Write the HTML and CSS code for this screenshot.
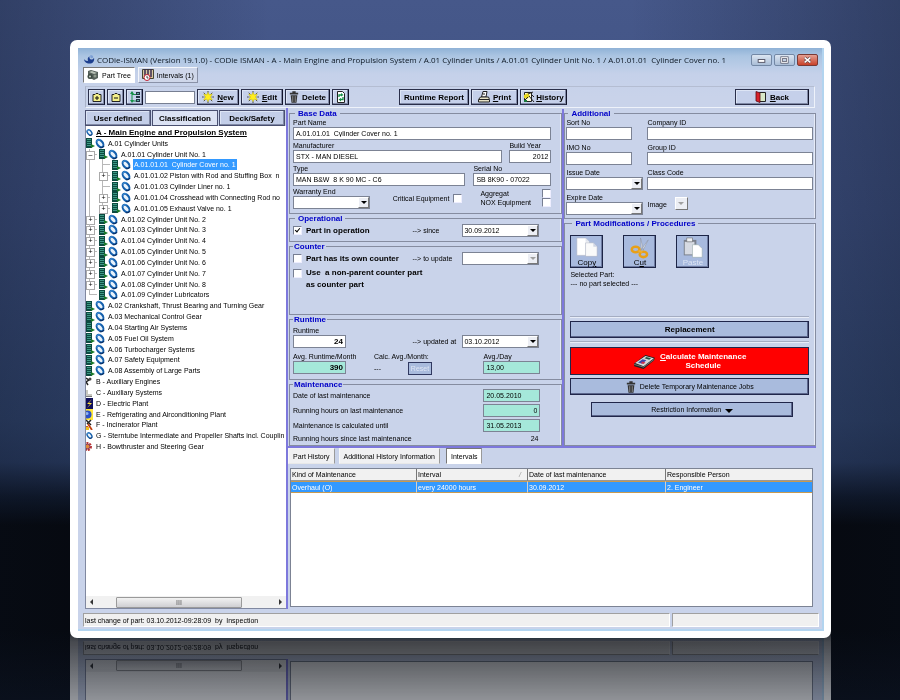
FILE: index.html
```html
<!DOCTYPE html>
<html lang="en">
<head>
<meta charset="utf-8">
<title>CODie-ISMAN</title>
<link rel="stylesheet" href="styles.css">
</head>
<body>
<svg class="defs" aria-hidden="true">
  <symbol id="i-cab" viewBox="0 0 9 10"><path fill="#0c4a40" d="M0 0h6v10H0z"/><path stroke="#3f9a86" stroke-width="1" d="M1 1.500h4M1 3.500h4M1 5.500h4M1 7.500h4"/><path fill="#1b7a2a" d="M5 6l4 2-4 2z"/></symbol>
  <symbol id="i-disc" viewBox="0 0 11 11"><ellipse cx="5.500" cy="5.500" rx="3" ry="4.600" transform="rotate(-40 5.500 5.500)" fill="#e8f2fb" stroke="#1560ad" stroke-width="2.200"/><path d="M1.500 3Q3 .8 6 1.500" fill="none" stroke="#4a9ae0"/><path d="M5 10q3 .8 5-1.500" fill="none" stroke="#0a2f66" stroke-width="1.200"/></symbol>
  <symbol id="i-trash" viewBox="0 0 12 14"><path fill="#333" d="M4 0h4v2h3v2H1V2h3zM2 5h8l-1 9H3z"/><path stroke="#999" d="M4.500 6v7M7.500 6v7"/></symbol>
  <symbol id="i-spark" viewBox="0 0 14 14"><path stroke="#333" stroke-width="1" stroke-dasharray="2 1" d="M7 0v14M0 7h14M2 2l10 10M12 2L2 12"/><path fill="#ffee20" stroke="#c8b800" stroke-width=".5" d="M7 1.500l1.300 3L12 3.500 10 7l2 3.500-3.700-1L7 12.500 5.700 9.500l-3.700 1L4 7 2 3.500l3.700 1z"/></symbol>
</svg>

<main class="window">
 <div class="client">
  <header class="titlebar">
    <svg class="logo" viewBox="0 0 12 10"><path fill="#1d3f8f" d="M11 3c1 4-2 7-5.500 6.500C2 9.500 0 7 0 4.500c1.500 2 3 2.500 4.500 2C3.500 5 4 2.500 6 1.500c-.5 2 .5 3.500 2 3.500S10.500 4 11 3z"/><path fill="#7c9fd4" d="M7 0c2 0 3 1 3.200 2.500C9.500 4 8 4 7.300 3.200 6.800 2.500 6.700 1 7 0z"/></svg>
    <h1>CODie-ISMAN (Version 19.1.0) - CODie ISMAN - A - Main Engine and Propulsion System / A.01 Cylinder Units / A.01.01 Cylinder Unit No. 1 / A.01.01.01&nbsp; Cylinder Cover no. 1</h1>
    <div class="winbtns">
      <button aria-label="Minimize"><svg viewBox="0 0 20 10"><rect x="6.500" y="4.500" width="7" height="3" fill="#fff" stroke="#556"/></svg></button>
      <button aria-label="Maximize"><svg viewBox="0 0 20 10"><rect x="7" y="2.500" width="6" height="5" fill="none" stroke="#556" stroke-width="2.500"/><rect x="7" y="2.500" width="6" height="5" fill="none" stroke="#fff"/></svg></button>
      <button class="close" aria-label="Close"><svg viewBox="0 0 20 10"><path d="M7 2.500l6 5M13 2.500l-6 5" stroke="#644" stroke-width="3"/><path d="M7 2.500l6 5M13 2.500l-6 5" stroke="#fff" stroke-width="1.600"/></svg></button>
    </div>
  </header>

  <nav class="viewtabs">
    <button class="on"><svg class="ic12" viewBox="0 0 12 12"><path fill="#55605a" d="M1 2l3-1 7 2v6l-4 2-6-3z"/><path fill="#b9c2b6" d="M2 3l3-1 5 2-3 1z"/><circle cx="3" cy="7.500" r="2.500" fill="#3d4a42"/><circle cx="3" cy="7.500" r="1" fill="#cfd6cc"/><circle cx="8" cy="7" r="1.500" fill="#8d988c"/></svg>Part Tree</button>
    <button><svg class="ic12" viewBox="0 0 12 12"><path fill="#d8c8a0" stroke="#443" d="M.5.500h11v9H.5z"/><path stroke="#3a2a50" stroke-width="1.500" d="M3 0v8M6 0v6M9 0v8"/><circle cx="5" cy="8.500" r="3" fill="#fff" stroke="#c02030"/><path d="M5 7v2h1.500" stroke="#222" fill="none" stroke-width=".8"/></svg>Intervals (1)</button>
  </nav>

  <div class="toolbar">
    <button class="tb sq" aria-label="Expand"><svg class="ic12" viewBox="0 0 12 12"><path fill="#f4f089" stroke="#222" d="M2 3.500h2l1-1h2l1 1h2v7H2z"/><path stroke="#111" d="M4 7h4M6 5v4"/></svg></button>
    <button class="tb sq" aria-label="Collapse"><svg class="ic12" viewBox="0 0 12 12"><path fill="#f4f089" stroke="#222" d="M2 3.500h2l1-1h2l1 1h2v7H2z"/><path stroke="#111" d="M4 7h4"/></svg></button>
    <button class="tb sq" aria-label="Levels"><svg class="ic12" viewBox="0 0 12 12"><path stroke="#159048" fill="none" d="M3 1v9h4M3 3.500h4"/><path fill="#159048" d="M1 3l2-3 2 3zM1 9l2 3 2-3z"/><path fill="#234" d="M7 1h4v3H7zM7 5h4v2H7zM7 8h4v3H7z"/><path fill="#5fb0a0" d="M8 2h2v1H8zM8 9h2v1H8z"/></svg></button>
    <input class="search" aria-label="Search">
    <button class="tb w42"><svg class="ic12"><use href="#i-spark"/></svg><span><u>N</u>ew</span></button>
    <button class="tb w42"><svg class="ic12"><use href="#i-spark"/></svg><span><u>E</u>dit</span></button>
    <button class="tb w44"><svg class="ic12 thin"><use href="#i-trash"/></svg><span>Delete</span></button>
    <button class="tb sq" aria-label="Refresh"><svg class="ic12" viewBox="0 0 12 12"><path fill="#fff" stroke="#222" d="M2.500.500h5l2 2v9h-7z"/><path fill="none" stroke="#159048" stroke-width="1.300" d="M4 6V4h3M8 6v2.500H5"/><path fill="#159048" d="M6 2l2.500 2L6 5.500zM6 7L3.500 8.500 6 10.500z"/></svg></button>
    <span class="gap"></span>
    <button class="tb w70">Runtime Report</button>
    <button class="tb w47"><svg class="ic12" viewBox="0 0 12 12"><path fill="#fff" stroke="#222" d="M3.500 6L5 .500h4L8 6z"/><path fill="#e8e4c8" stroke="#222" d="M.5 8.500L2.500 6h8l1 2.500v2.500H.5z"/><path stroke="#222" d="M1 8.500h10M5 3h2"/></svg><span><u>P</u>rint</span></button>
    <button class="tb w47 hist"><svg class="ic12" viewBox="0 0 12 12"><path fill="#fffce0" stroke="#222" d="M1.500 1.500h7v9h-7z"/><path fill="#e8d820" d="M1 4l4-2 2 3-3 3-3-1z"/><path stroke="#222" d="M5 3l5-2M6 5l5 6M8 3l3 3M2 9l3-3"/><path fill="#197a3a" d="M1 9h3v2H1z"/></svg><span><u>H</u>istory</span></button>
    <span class="grow"></span>
    <button class="tb back"><svg class="ic12" viewBox="0 0 12 12"><path fill="#d8e8c8" stroke="#222" d="M4.500 1.500h6v9h-6z"/><path fill="#d8202a" stroke="#5a0a10" stroke-width=".8" d="M1 .500l4 1.500v9.500L1 10z"/></svg><span><u>B</u>ack</span></button>
  </div>

  <div class="body">
   <aside class="left">
    <div class="classtabs"><button>User defined</button><button class="on">Classification</button><button>Deck/Safety</button></div>
    <div class="treebox">
     <ul class="tree">
      <li class="root"><svg class="ic0"><use href="#i-disc"/></svg><u>A - Main Engine and Propulsion System</u></li>
      <li><svg class="cab"><use href="#i-cab"/></svg><svg class="disc"><use href="#i-disc"/></svg><span>A.01 Cylinder Units</span></li>
      <li><i class="ex minus"></i><svg class="cab"><use href="#i-cab"/></svg><svg class="disc"><use href="#i-disc"/></svg><span>A.01.01 Cylinder Unit No. 1</span></li>
      <li class="l3"><i class="ex leaf"></i><svg class="cab"><use href="#i-cab"/></svg><svg class="disc"><use href="#i-disc"/></svg><span class="sel">A.01.01.01&nbsp; Cylinder Cover no. 1</span></li>
      <li class="l3"><i class="ex"></i><svg class="cab"><use href="#i-cab"/></svg><svg class="disc"><use href="#i-disc"/></svg><span>A.01.01.02 Piston with Rod and Stuffing Box&nbsp; n</span></li>
      <li class="l3"><i class="ex leaf"></i><svg class="cab"><use href="#i-cab"/></svg><svg class="disc"><use href="#i-disc"/></svg><span>A.01.01.03 Cylinder Liner no. 1</span></li>
      <li class="l3"><i class="ex"></i><svg class="cab"><use href="#i-cab"/></svg><svg class="disc"><use href="#i-disc"/></svg><span>A.01.01.04 Crosshead with Connecting Rod no</span></li>
      <li class="l3"><i class="ex"></i><svg class="cab"><use href="#i-cab"/></svg><svg class="disc"><use href="#i-disc"/></svg><span>A.01.01.05 Exhaust Valve no. 1</span></li>
      <li><i class="ex"></i><svg class="cab"><use href="#i-cab"/></svg><svg class="disc"><use href="#i-disc"/></svg><span>A.01.02 Cylinder Unit No. 2</span></li>
      <li><i class="ex"></i><svg class="cab"><use href="#i-cab"/></svg><svg class="disc"><use href="#i-disc"/></svg><span>A.01.03 Cylinder Unit No. 3</span></li>
      <li><i class="ex"></i><svg class="cab"><use href="#i-cab"/></svg><svg class="disc"><use href="#i-disc"/></svg><span>A.01.04 Cylinder Unit No. 4</span></li>
      <li><i class="ex"></i><svg class="cab"><use href="#i-cab"/></svg><svg class="disc"><use href="#i-disc"/></svg><span>A.01.05 Cylinder Unit No. 5</span></li>
      <li><i class="ex"></i><svg class="cab"><use href="#i-cab"/></svg><svg class="disc"><use href="#i-disc"/></svg><span>A.01.06 Cylinder Unit No. 6</span></li>
      <li><i class="ex"></i><svg class="cab"><use href="#i-cab"/></svg><svg class="disc"><use href="#i-disc"/></svg><span>A.01.07 Cylinder Unit No. 7</span></li>
      <li><i class="ex"></i><svg class="cab"><use href="#i-cab"/></svg><svg class="disc"><use href="#i-disc"/></svg><span>A.01.08 Cylinder Unit No. 8</span></li>
      <li><i class="ex leaf last"></i><svg class="cab"><use href="#i-cab"/></svg><svg class="disc"><use href="#i-disc"/></svg><span>A.01.09 Cylinder Lubricators</span></li>
      <li><svg class="cab"><use href="#i-cab"/></svg><svg class="disc"><use href="#i-disc"/></svg><span>A.02 Crankshaft, Thrust Bearing and Turning Gear</span></li>
      <li><svg class="cab"><use href="#i-cab"/></svg><svg class="disc"><use href="#i-disc"/></svg><span>A.03 Mechanical Control Gear</span></li>
      <li><svg class="cab"><use href="#i-cab"/></svg><svg class="disc"><use href="#i-disc"/></svg><span>A.04 Starting Air Systems</span></li>
      <li><svg class="cab"><use href="#i-cab"/></svg><svg class="disc"><use href="#i-disc"/></svg><span>A.05 Fuel Oil System</span></li>
      <li><svg class="cab"><use href="#i-cab"/></svg><svg class="disc"><use href="#i-disc"/></svg><span>A.06 Turbocharger Systems</span></li>
      <li><svg class="cab"><use href="#i-cab"/></svg><svg class="disc"><use href="#i-disc"/></svg><span>A.07 Safety Equipment</span></li>
      <li><svg class="cab"><use href="#i-cab"/></svg><svg class="disc"><use href="#i-disc"/></svg><span>A.08 Assembly of Large Parts</span></li>
      <li><svg class="ic0" viewBox="4 0 7 11"><path stroke="#222" stroke-width="1.500" fill="none" d="M4 2l3 2-3 2 2 3"/><circle cx="8" cy="3" r="1.500" fill="#444"/></svg><span>B - Auxiliary Engines</span></li>
      <li><svg class="ic0" viewBox="4 0 7 11"><path fill="#c8c8c0" d="M4 3h2v4h4v3H4z"/><path stroke="#777" d="M4 9.500h6"/></svg><span>C - Auxiliary Systems</span></li>
      <li><svg class="ic0" viewBox="0 0 7 11"><path fill="#10105c" d="M0 0h7v11H0z"/><path fill="#ffe23a" d="M6 1L1 6h3L1 10l5-5H3z"/></svg><span>D - Electric Plant</span></li>
      <li><svg class="ic0" viewBox="0 0 7 11"><path fill="#ffe838" d="M0 0h7v11H0z"/><circle cx="1.500" cy="5.500" r="4" fill="#2a50c8"/><circle cx="1" cy="4.500" r="1.500" fill="#8fb4f0"/></svg><span>E - Refrigerating and Airconditioning Plant</span></li>
      <li><svg class="ic0" viewBox="0 0 7 11"><path stroke="#222" stroke-width="1.500" fill="none" d="M0 1l5 5M5 1L1 5"/><path stroke="#c04010" stroke-width="1.800" d="M2 5l4 6M1 7v4"/><path fill="#f0c020" d="M0 8h3v3H0z"/></svg><span>F - Incinerator Plant</span></li>
      <li><svg class="ic0"><use href="#i-disc"/></svg><span>G - Sterntube Intermediate and Propeller Shafts incl. Couplin</span></li>
      <li><svg class="ic0" viewBox="0 0 7 11"><circle cx="1.500" cy="5.500" r="3.500" fill="none" stroke="#b83030" stroke-width="2" stroke-dasharray="2 1"/><circle cx="1.500" cy="5.500" r="2.500" fill="#e08838" stroke="#803060"/></svg><span>H - Bowthruster and Steering Gear</span></li>
     </ul>
     <div class="hscroll"><i class="al"></i><span class="thumb">III</span><i class="ar"></i></div>
    </div>
   </aside>

   <div class="right">
    <div class="forms">
     <form class="col a">
      <fieldset class="base">
        <legend>Base Data</legend>
        <div class="f"><label for="pn">Part Name</label><input id="pn" value="A.01.01.01  Cylinder Cover no. 1"></div>
        <div class="cols c1">
          <div class="f"><label for="mf">Manufacturer</label><input id="mf" value="STX - MAN DIESEL"></div>
          <div class="f"><label for="by">Build Year</label><input id="by" class="num" value="2012"></div>
        </div>
        <div class="cols c2">
          <div class="f"><label for="ty">Type</label><input id="ty" value="MAN B&amp;W  8 K 90 MC - C6"></div>
          <div class="f"><label for="sn">Serial No</label><input id="sn" value="SB 8K90 - 07022"></div>
        </div>
        <div class="cols c3">
          <div class="f"><label for="we">Warranty End</label><span class="combo"><select id="we"><option></option></select><i></i></span></div>
          <label class="ck crit">Critical Equipment<input type="checkbox"></label>
          <div class="two"><label class="ck">Aggregat<input type="checkbox"></label><label class="ck">NOX Equipment<input type="checkbox"></label></div>
        </div>
      </fieldset>
      <fieldset class="oper">
        <legend>Operational</legend>
        <div class="line"><label class="bck"><input type="checkbox" checked>Part in operation</label><label class="mid" for="si">--&gt; since</label><span class="combo"><select id="si"><option>30.09.2012</option></select><i></i></span></div>
      </fieldset>
      <fieldset class="counter flush">
        <legend>Counter</legend>
        <div class="line"><label class="bck"><input type="checkbox">Part has its own counter</label><label class="mid" for="tu">--&gt; to update</label><span class="combo off"><select id="tu" disabled><option></option></select><i></i></span></div>
        <label class="bck top"><input type="checkbox"><span>Use&nbsp; a non-parent counter part<br>as counter part</span></label>
      </fieldset>
      <fieldset class="runtime flush">
        <legend>Runtime</legend>
        <div class="line end"><div class="f w53"><label for="rt">Runtime</label><input id="rt" class="num b" value="24"></div><label class="mid" for="ua">--&gt; updated at</label><span class="combo"><select id="ua"><option>03.10.2012</option></select><i></i></span></div>
        <div class="avg">
          <div class="f w53"><label for="ar">Avg. Runtime/Month</label><input id="ar" class="num b green" value="390"></div>
          <div class="calc"><span>Calc. Avg./Month:</span><div><span>---</span><button type="button" disabled>Reset</button></div></div>
          <div class="f w57"><label for="ad">Avg./Day</label><input id="ad" class="green" value="13,00"></div>
        </div>
      </fieldset>
      <fieldset class="maint flush">
        <legend>Maintenance</legend>
        <div class="mrow"><label for="m1">Date of last maintenance</label><input id="m1" class="green" value="20.05.2010"></div>
        <div class="mrow"><label for="m2">Running hours on last maintenance</label><input id="m2" class="green num" value="0"></div>
        <div class="mrow"><label for="m3">Maintenance is calculated until</label><input id="m3" class="green" value="31.05.2013"></div>
        <div class="mrow"><span>Running hours since last maintenance</span><output>24</output></div>
      </fieldset>
     </form>

     <form class="col b">
      <fieldset class="addl">
        <legend>Additional</legend>
        <div class="cols c4"><div class="f"><label for="so">Sort No</label><input id="so"></div><div class="f"><label for="co">Company ID</label><input id="co"></div></div>
        <div class="cols c4"><div class="f"><label for="im">IMO No</label><input id="im"></div><div class="f"><label for="gr">Group ID</label><input id="gr"></div></div>
        <div class="cols c5"><div class="f"><label for="is">Issue Date</label><span class="combo"><select id="is"><option></option></select><i></i></span></div><div class="f"><label for="cc">Class Code</label><input id="cc"></div></div>
        <div class="cols c5"><div class="f"><label for="ed">Expire Date</label><span class="combo"><select id="ed"><option></option></select><i></i></span></div><div class="img"><span>Image</span><button type="button" class="drop" disabled aria-label="Image menu"></button></div></div>
      </fieldset>
      <fieldset class="mods">
        <legend>Part Modifications / Procedures</legend>
        <div class="big">
          <button type="button"><svg viewBox="0 0 32 32"><path fill="#fff" stroke="#a8b0c0" stroke-width=".6" d="M6 2h9l4 4v14H6z"/><path fill="#dfe3ec" d="M15 2v4h4z"/><path fill="#fafafa" stroke="#a8b0c0" stroke-width=".6" d="M15 7h8l4 4v10H15z"/><path fill="#cfd6e4" d="M23 7v4h4z"/></svg><span>Cop<u>y</u></span></button>
          <button type="button"><svg viewBox="0 0 32 32"><path fill="#e6eaf0" stroke="#8a94a6" stroke-width=".6" d="M17 2l3 12-2 1zM25 4l-8 11 2 1z"/><g fill="none" stroke="#e8a018" stroke-width="2.600"><ellipse cx="12" cy="14" rx="4" ry="2.800"/><ellipse cx="20" cy="19" rx="3.800" ry="2.800"/></g><path stroke="#f0b030" stroke-width="2" d="M15 15l4 2"/></svg><span>C<u>u</u>t</span></button>
          <button type="button" disabled><svg viewBox="0 0 32 32"><path fill="#7a808c" d="M7 4h13v16H7z"/><path fill="#d6dae2" d="M8 6h10v13H8z"/><path fill="#eef0f4" stroke="#666" stroke-width=".6" d="M10 2h6v4h-6z"/><path fill="#fff" stroke="#9aa" stroke-width=".6" d="M16 9h6l4 4v9H16z"/></svg><span>Paste</span></button>
        </div>
        <p class="selp">Selected Part:<br>--- no part selected ---</p>
        <hr>
        <button type="button" class="wide bold">Replacement</button>
        <hr>
        <button type="button" class="wide red"><svg viewBox="0 0 24 16"><path fill="#222" d="M1 10L13 1l10 3-1 3-11 9-10-3z"/><path fill="#d8d8d8" d="M2 9.500L13 2l9 2.500L11 13z"/><path fill="#3d46b0" d="M5 9l5-3.500 4 1.200L9.500 10.500z"/><path fill="#1d5a48" d="M12 4.500l2-1.300 5 1.300-2 1.600z"/><path fill="#d03048" d="M10 8l3 1-2 1.600-3-1z"/><path stroke="#777" fill="none" d="M1 11l10 3 11-8"/></svg><span><u>C</u>alculate Maintenance<br>Schedule</span></button>
        <button type="button" class="wide"><svg class="ic12 thin"><use href="#i-trash"/></svg>Delete Temporary Maintenance Jobs</button>
        <button type="button" class="wide restr">Restriction Information<i class="tri"></i></button>
      </fieldset>
     </form>
    </div>

    <div class="subtabs"><button>Part History</button><button>Additional History Information</button><button class="on">Intervals</button></div>
    <div class="gridbox">
      <table>
        <thead><tr><th class="k1">Kind of Maintenance</th><th class="k2"><span>Interval<i>/</i></span></th><th class="k3">Date of last maintenance</th><th>Responsible Person</th></tr></thead>
        <tbody><tr><td>Overhaul (O)</td><td>every 24000 hours</td><td>30.09.2012</td><td>2. Engineer</td></tr></tbody>
      </table>
    </div>
   </div>
  </div>

  <footer class="status"><span class="msg">last change of part: 03.10.2012-09:28:09&nbsp; by&nbsp; Inspection</span><span class="pane"></span></footer>
 </div>
</main>
</body>
</html>
```
FILE: styles.css
```css
* { box-sizing: border-box; }
html { height: 100%; }
body {
  margin: 0;
  height: 100%;
  padding: 40px 69px 62px 70px;
  overflow: hidden;
  display: flex;
  background:
    linear-gradient(to right, rgba(10,18,34,.35), transparent 30%, transparent 70%, rgba(10,18,34,.35)),
    linear-gradient(#46588a 0, #3f5182 30%, #32466f 60%, #2b3d63 66%, #10192b 71%, #05070b 75%, #05070b 90%, #0a0f19 100%);
  font-family: "Liberation Sans", sans-serif;
  font-size: 7px;
  line-height: 9px;
  color: #000;
}
.defs { position: absolute; width: 0; height: 0; }
button, input, select { font: inherit; color: inherit; margin: 0; padding: 0; border-radius: 0; }
button { cursor: pointer; }
ul, p, h1 { margin: 0; padding: 0; }
svg { flex: none; }

.window {
  flex: 1;
  min-width: 0;
  display: flex;
  background: #fff;
  border-radius: 7px;
  padding: 8px 7px 7px 8px;
  -webkit-box-reflect: below -8px linear-gradient(to top, rgba(0,0,0,.12), rgba(0,0,0,.26) 12px, rgba(0,0,0,.55) 70px);
}
.client {
  flex: 1;
  min-width: 0;
  display: flex;
  flex-direction: column;
  padding: 4px 3px 2px 5px;
  background: linear-gradient(#8fb2d6 0, #abc5e2 8px, #c5d1ea 26px, #c9d3ea 50px);
  border: solid #b2d4ef;
  border-width: 0 2px 2px 0;
}
.titlebar { display: flex; align-items: center; height: 15px; flex: none; padding: 0 1px; }
.logo { width: 11px; height: 9px; margin-right: 2px; }
.titlebar h1 { flex: 1; font: 8px/12px "Open Sans", sans-serif; white-space: nowrap; color: #0c1622; }
.winbtns { display: flex; gap: 2px; }
.winbtns button { width: 21px; height: 12px; border: 1px solid #7388a5; border-radius: 2px; background: linear-gradient(#dce6f2, #a9bdd6); display: flex; }
.winbtns .close { background: linear-gradient(#e5a093, #c8412a); border-color: #7a3a35; }
.winbtns svg { width: 100%; height: 10px; }

.viewtabs { display: flex; gap: 3px; height: 16px; flex: none; }
.viewtabs button { display: flex; align-items: center; gap: 3px; padding: 0 3px; border: 1px solid; border-color: #f4f6fb #8a92a8 #8a92a8 #f4f6fb; background: #cfd7ea; }
.viewtabs .on { background: #fff; border-color: #777 #fff #fff #777; }
.ic12 { width: 12px; height: 12px; }
.thin { width: 10px; }

.toolbar { display: flex; align-items: center; height: 22px; flex: none; margin: 3px 4px 0 2px; padding: 0 5px 0 2px; gap: 2px; border: 1px solid #eef2fa; border-left-color: #a9b2c8; border-top-color: #b4bdd2; }
.tb { display: flex; align-items: center; justify-content: center; gap: 3px; height: 16px; padding: 0; background: #c5d0ea; border: 1px solid #2a2f4a; border-right-color: #10132a; box-shadow: inset -1px -1px #8089a5, inset 1px 1px #dde5f5; font: bold 8px/9px "Liberation Sans", sans-serif; white-space: nowrap; }
.sq { width: 17px; }
.w42 { width: 42px; }
.w44 { width: 45px; }
.w47 { width: 47px; }
.hist { gap: 1px; }
.w70 { width: 70px; }
.gap { width: 46px; }
.grow { flex: 1; }
.back { width: 74px; }
.search { width: 50px; height: 13px; border: 1px solid #777f92; background: #fff; }

.body { flex: 1; display: flex; min-height: 0; margin: 0 3px 0 2px; }
.left { width: 201px; flex: none; display: flex; flex-direction: column; padding-top: 2px; }
.classtabs { display: flex; gap: 1px; height: 16px; flex: none; padding-right: 1px; }
.classtabs button { flex: 1; border: 1px solid #4a5070; background: #c3cee8; box-shadow: inset -1px -1px #8089a5, inset 1px 1px #dde5f5; font: bold 8px/9px "Liberation Sans", sans-serif; white-space: nowrap; }
.classtabs .on { background: #dbe2f3; box-shadow: none; }
.treebox { flex: 1; min-height: 0; display: flex; flex-direction: column; justify-content: space-between; background: #fff; border: solid #8088a0; border-width: 0 0 1px 1px; overflow: hidden; }
.tree { list-style: none; height: 325px; display: grid; grid-auto-rows: 1fr; margin-top: 1px; }
.tree li { display: flex; align-items: center; min-height: 0; white-space: nowrap; }
.tree .l3 { padding-left: 13px; background: linear-gradient(#b8b8b8, #b8b8b8) 3px 0 / 1px 100% no-repeat; }
.cab { width: 9px; height: 10px; }
.disc { width: 10px; height: 11px; margin-right: 3px; }
.ic0 { width: 7px; height: 11px; margin-right: 3px; }
.tree .root { font: bold 8px/9px "Liberation Sans", sans-serif; }
.sel { background: #3399ff; color: #fff; outline: 1px solid #3399ff; }
.ex { position: relative; width: 13px; height: 100%; flex: none; background: linear-gradient(#b8b8b8, #b8b8b8) 3px 0 / 1px 100% no-repeat, linear-gradient(#b8b8b8, #b8b8b8) 3px 50% / 8px 1px no-repeat; }
.last { background-size: 1px 50%, 8px 1px; }
.ex::before { content: "+"; position: absolute; left: 0; top: 2px; width: 7px; height: 7px; border: 1px solid #aaa; background: #fff; font: 7px/5px "Liberation Sans", sans-serif; text-align: center; }
.minus::before { content: "–"; }
.leaf::before { display: none; }
.hscroll { height: 12px; display: flex; align-items: center; justify-content: space-between; padding: 0 4px; background: #f1f1f1; }
.hscroll i { border: 3px solid transparent; }
.hscroll .al { border-right-color: #333; border-left-width: 0; }
.hscroll .ar { border-left-color: #333; border-right-width: 0; }
.thumb { width: 126px; height: 11px; margin-right: 14px; border: 1px solid #9a9a9a; border-radius: 1px; background: linear-gradient(#f2f2f2, #cfcfd2); text-align: center; color: #555; }

.right { flex: 1; min-width: 0; display: flex; flex-direction: column; border-left: 2px solid #7d78dc; }
.forms { display: flex; flex: none; padding-top: 1px; border-bottom: 2px solid #7d78dc; }
.col { display: flex; flex-direction: column; }
.a { flex: 275; min-width: 0; padding-left: 1px; border-right: 2px solid #7d78dc; }
.b { flex: 253; min-width: 0; }
fieldset { margin: 0; min-width: 0; border: 1px solid #858ca0; box-shadow: inset -1px 0 #e6ebf7; padding: 0 10px 4px 3px; }
.right legend { margin-left: 2px; padding: 0 3px; font: bold 8px/9px "Liberation Sans", sans-serif; color: #0000c8; height: 9px; }
.right .flush legend { margin-left: 0; padding: 0 1px; }
.f { display: flex; flex-direction: column; min-width: 0; }
.f label { height: 9px; white-space: nowrap; }
.f input, .mrow input { width: 100%; height: 13px; border: 1px solid #7c8394; background: #fff; padding: 0 2px; }
.f input.green, .mrow input.green { background: #a5e8da; }
.num { text-align: right; }
.f .b.num { flex: none; font: bold 8px/9px "Liberation Sans", sans-serif; }
.base { display: flex; flex-direction: column; gap: 1px; }
.cols { display: grid; }
.c1 { grid-template-columns: 1fr 42px; gap: 7px; }
.c2 { grid-template-columns: 1fr 78px; gap: 8px; }
.c3 { grid-template-columns: 77px 1fr 71px; }
.crit { justify-content: flex-end; }
.ck { display: flex; align-items: center; gap: 4px; white-space: nowrap; }
.ck input, .bck input { appearance: none; width: 9px; height: 9px; flex: none; background: #fff; border: 1px solid; border-color: #777f92 #eef #eef #777f92; position: relative; }
.bck input:checked::after { content: ""; position: absolute; left: 2px; top: 0; width: 2px; height: 4px; border: solid #000; border-width: 0 1px 1px 0; transform: rotate(40deg); }
.crit { padding-right: 8px; margin-right: 10px; }
.two { display: flex; flex-direction: column; justify-content: space-between; padding: 2px 0; }
.two .ck { justify-content: space-between; }
.combo { display: flex; height: 13px; width: 77px; background: #fff; border: 1px solid #7c8394; flex: none; }
.combo select { appearance: none; flex: 1; min-width: 0; border: 0; background: none; padding: 0 1px; opacity: 1; }
.combo i, .drop { width: 11px; flex: none; background: #eceef4; border: 1px solid; border-color: #fff #777 #777 #fff; display: flex; align-items: center; justify-content: center; }
.combo i::after, .drop::after, .tri { content: ""; border: 3px solid transparent; border-top-color: #000; border-bottom: 0; }
.off i::after, .drop::after { border-top-color: #a0a0a0; }
.oper .line, .counter .line { margin-top: 1px; }
.line { display: flex; align-items: center; padding-right: 12px; }
.line .mid { margin-left: auto; width: 50px; white-space: nowrap; }
.bck { display: flex; align-items: center; gap: 4px; font: bold 8px/12px "Liberation Sans", sans-serif; white-space: nowrap; }
.top { align-items: flex-start; margin-top: 2px; }
.top input { margin-top: 2px; }
.counter { min-height: 73px; }
.end { align-items: flex-end; margin-top: 2px; }
.end .mid { height: 11px; }
.w53 { width: 53px; }
.w57 { width: 57px; }
.avg { display: flex; justify-content: space-between; margin-top: 4px; padding-right: 11px; }
.calc { width: 70px; margin-left: 28px; margin-right: auto; white-space: nowrap; }
.calc div { display: flex; justify-content: space-between; align-items: center; padding-right: 12px; height: 14px; }
.calc button { width: 24px; height: 13px; border: 1px solid #303860; background: #a9bbdd; color: #dfe6f5; }
.mrow { display: flex; justify-content: space-between; align-items: center; height: 13px; margin-bottom: 2px; padding-right: 11px; }
.mrow:last-child { height: 9px; margin: 0; }
.maint { padding-bottom: 2px; }
.mrow input { width: 57px; }
.mrow output { padding-right: 2px; }

.b fieldset { padding: 0 2px 3px 1px; }
.addl { display: flex; flex-direction: column; gap: 3px; }
.c4 { grid-template-columns: 66px 1fr; gap: 15px; }
.c5 { grid-template-columns: 77px 1fr; gap: 4px; }
.img { display: flex; align-items: center; gap: 8px; }
.drop { width: 13px; height: 13px; margin-bottom: 2px; }
.b .mods { flex: 1; padding: 0 6px 0 5px; }
.big { display: flex; gap: 20px; padding: 7px 0 0; }
.big button { display: flex; flex-direction: column; width: 33px; height: 33px; border: 1px solid #1d2546; background: #a8bade; box-shadow: inset -1px -1px #6f7ca2; align-items: center; position: relative; }
.big svg { width: 31px; height: 31px; }
.big span { position: absolute; bottom: 0; font-size: 8px; }
.big button:disabled span { color: #dde5f5; }
.selp { margin: 2px 0 28px; }
.mods hr { margin: 0; border: 0; border-top: 1px solid #a5adc2; border-bottom: 1px solid #e8edf8; height: 2px; }
.wide { display: flex; align-items: center; justify-content: center; gap: 4px; width: 100%; height: 17px; margin: 3px 0; border: 1px solid #20264a; background: #a9bbdd; box-shadow: inset -1px -1px #5c668c; }
.bold, .red { font: bold 8px/9px "Liberation Sans", sans-serif; }
.red { height: 28px; background: #ff0000; color: #fff; box-shadow: none; margin-top: 4px; }
.red svg { width: 23px; height: 15px; }
.mods .restr { width: calc(100% - 37px); height: 15px; margin: 7px 16px 0 21px; }
.tri { border-width: 4px; margin-top: 2px; }

.subtabs { display: flex; gap: 4px; height: 16px; flex: none; }
.subtabs button { border: 1px solid; border-color: #f4f4f4 #9a9a9a #e8e8e8 #f8f8f8; background: #f0f0f2; padding: 0 4px; }
.subtabs .on { background: #fff; border-color: #777 #999 #fff #777; margin-left: 2px; }
.gridbox { flex: 1; min-height: 0; margin: 4px 3px 2px 2px; background: #fff; border: 1px solid #7c8394; }
table { width: 100%; border-collapse: separate; border-spacing: 0; table-layout: fixed; }
th, td { height: 12px; padding: 0 0 0 1px; text-align: left; font-weight: normal; white-space: nowrap; border-left: 1px solid #d0d0d0; }
th { background: #f1f1f1; border-left-color: #777; border-bottom: 1px solid #999; }
th:first-child, td:first-child { border-left: 0; }
th span { display: flex; justify-content: space-between; padding-right: 6px; }
th i { color: #999; }
.k1 { width: 125px; }
.k2 { width: 111px; }
.k3 { width: 138px; }
td { background: #3399ff; color: #fff; border-top: 1px solid #c89a50; border-bottom: 1px solid #c89a50; }
.status { display: flex; gap: 2px; height: 14px; flex: none; margin-top: 4px; }
.status span { background: #f0f0f0; border: 1px solid; border-color: #a0a0a0 #fff #fff #a0a0a0; }
.msg { flex: 1; padding: 2px 1px; }
.pane { width: 147px; }
```
